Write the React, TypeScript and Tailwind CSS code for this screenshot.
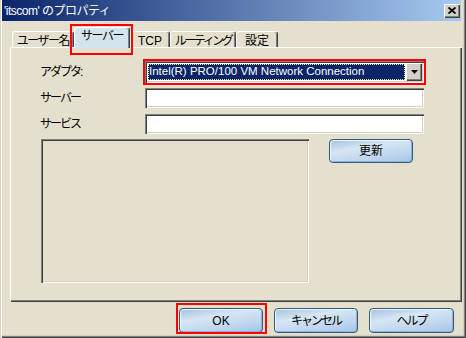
const sunken =
  "shadow-[inset_1px_1px_#808080,inset_2px_2px_#404040,inset_-1px_-1px_#ffffff,inset_-2px_-2px_#d4d0c8]";
const raised =
  "shadow-[inset_1px_1px_#ffffff,inset_-1px_-1px_#404040,inset_-2px_-2px_#808080]";

function XpButton({ label, w, tracking = "" }: { label: string; w: string; tracking?: string }) {
  return (
    <div
      className={`${w} h-full flex items-center justify-center rounded-[4px] border border-[#2e5c7e] bg-[linear-gradient(170deg,#a4bfda_0%,#d6e6f5_35%,#c0d6ee_70%,#a2c4ea_100%)] shadow-[inset_1px_1px_#eef5fb,inset_-1px_-1px_#8fb2d6] ${tracking}`}
    >
      <span className="leading-none">{label}</span>
    </div>
  );
}

function Tab({ label, w, tracking = "" }: { label: string; w: string; tracking?: string }) {
  return (
    <div
      className={`${w} h-[16px] flex items-start justify-center pt-[3px] rounded-t-[3px] border-t border-l border-white shadow-[inset_-1px_0_#808080] border-r border-r-[#404040] whitespace-nowrap ${tracking}`}
    >
      <span className="leading-none">{label}</span>
    </div>
  );
}

export default function App() {
  return (
    <div className="w-[466px] h-[338px] bg-[#e5e0cd] flex flex-col pl-[2px] pr-[5px] font-[family-name:'Liberation_Sans','Noto_Sans_CJK_JP',sans-serif] text-[12px] text-black shadow-[inset_1px_0_#d8d3c0,inset_2px_0_#ffffff,inset_-1px_-1px_#404040,inset_-2px_-2px_#808080,inset_-3px_-3px_#d4d0c8] overflow-hidden select-none">
      {/* Title bar */}
      <div className="h-[21px] shrink-0 flex items-center bg-[linear-gradient(90deg,#0a246a,#a6caf0)] pl-[2px] pr-[1px]">
        <span className="text-white leading-none tracking-[-0.5px]">'itscom' のプロパティ</span>
        <div className={`ml-auto w-[16px] h-[14px] bg-[#d4d0c8] flex items-center justify-center ${raised}`}>
          <svg width="8" height="7" viewBox="0 0 8 7">
            <path d="M0.5 0.5 L7.5 6.5 M7.5 0.5 L0.5 6.5" stroke="#000" strokeWidth="1.8" />
          </svg>
        </div>
      </div>

      {/* Tabs */}
      <div className="mt-[6px] ml-[10px] h-[20px] shrink-0 flex items-end relative z-10">
        <Tab label="ユーザー名" w="w-[62px]" tracking="tracking-[-1.5px]" />
        <div className="relative w-[56px] h-[21px] -mb-[1px] bg-[#d4e4ec] flex items-start justify-center pt-[2px] rounded-t-[3px] border-t border-l border-white border-r border-r-[#404040] shadow-[inset_-1px_0_#808080] tracking-[-1.5px] whitespace-nowrap">
          <span className="leading-none">サーバー</span>
          <div className="absolute -left-[5px] -top-[4px] w-[63px] h-[31px] border-2 border-[#ff0000]" />
        </div>
        <Tab label="TCP" w="w-[40px]" />
        <Tab label="ルーティング" w="w-[66px]" tracking="tracking-[-2.5px]" />
        <Tab label="設定" w="w-[42px]" />
      </div>

      {/* Panel */}
      <div className="ml-[8px] h-[254px] shrink-0 border-t border-l border-white shadow-[inset_-1px_-1px_#808080,1px_1px_#404040] pl-[29px] pt-[13px] flex flex-col">
        <div className="flex items-center h-[22px]">
          <span className="w-[105px] leading-none tracking-[-2px]">アダプタ:</span>
          <div className="relative w-[279px] h-[22px]">
            <div className={`w-full h-full bg-white flex p-[2px] ${sunken}`}>
              <div className="flex-1 m-[1px] bg-[#0a246a] text-white flex items-center pl-[1px] outline outline-1 outline-dotted outline-[#e8e890] -outline-offset-1 whitespace-nowrap overflow-hidden">
                <span className="leading-none text-[11.5px]">Intel(R) PRO/100 VM Network Connection</span>
              </div>
              <div className={`w-[16px] h-full bg-[#d4d0c8] flex items-center justify-center ${raised}`}>
                <svg width="7" height="4" viewBox="0 0 7 4">
                  <path d="M0 0 H7 L3.5 4 Z" fill="#000" />
                </svg>
              </div>
            </div>
            <div className="absolute -left-[2px] -top-[2px] -right-[2px] -bottom-[2px] border-2 border-[#ff0000]" />
          </div>
        </div>

        <div className="flex items-center h-[20px] mt-[5px]">
          <span className="w-[105px] leading-none tracking-[-2px]">サーバー</span>
          <div className={`w-[279px] h-[20px] bg-white ${sunken}`} />
        </div>

        <div className="flex items-center h-[20px] mt-[6px]">
          <span className="w-[105px] leading-none tracking-[-2px]">サービス</span>
          <div className={`w-[279px] h-[20px] bg-white ${sunken}`} />
        </div>

        <div className="flex mt-[5px]">
          <div className={`ml-[1px] w-[268px] h-[144px] ${sunken}`} />
          <div className="ml-[20px] h-[24px]">
            <XpButton label="更新" w="w-[84px]" />
          </div>
        </div>
      </div>

      {/* Bottom buttons */}
      <div className="mt-[7px] mr-[7px] h-[25px] shrink-0 flex justify-end gap-[11px]">
        <div className="relative h-full">
          <XpButton label="OK" w="w-[84px]" />
          <div className="absolute -left-[3px] -top-[5px] -right-[4px] -bottom-[1px] border-2 border-[#ff0000]" />
        </div>
        <div className="h-full">
          <XpButton label="キャンセル" w="w-[84px]" tracking="tracking-[-2px]" />
        </div>
        <div className="h-full">
          <XpButton label="ヘルプ" w="w-[85px]" tracking="tracking-[-2px]" />
        </div>
      </div>
    </div>
  );
}
